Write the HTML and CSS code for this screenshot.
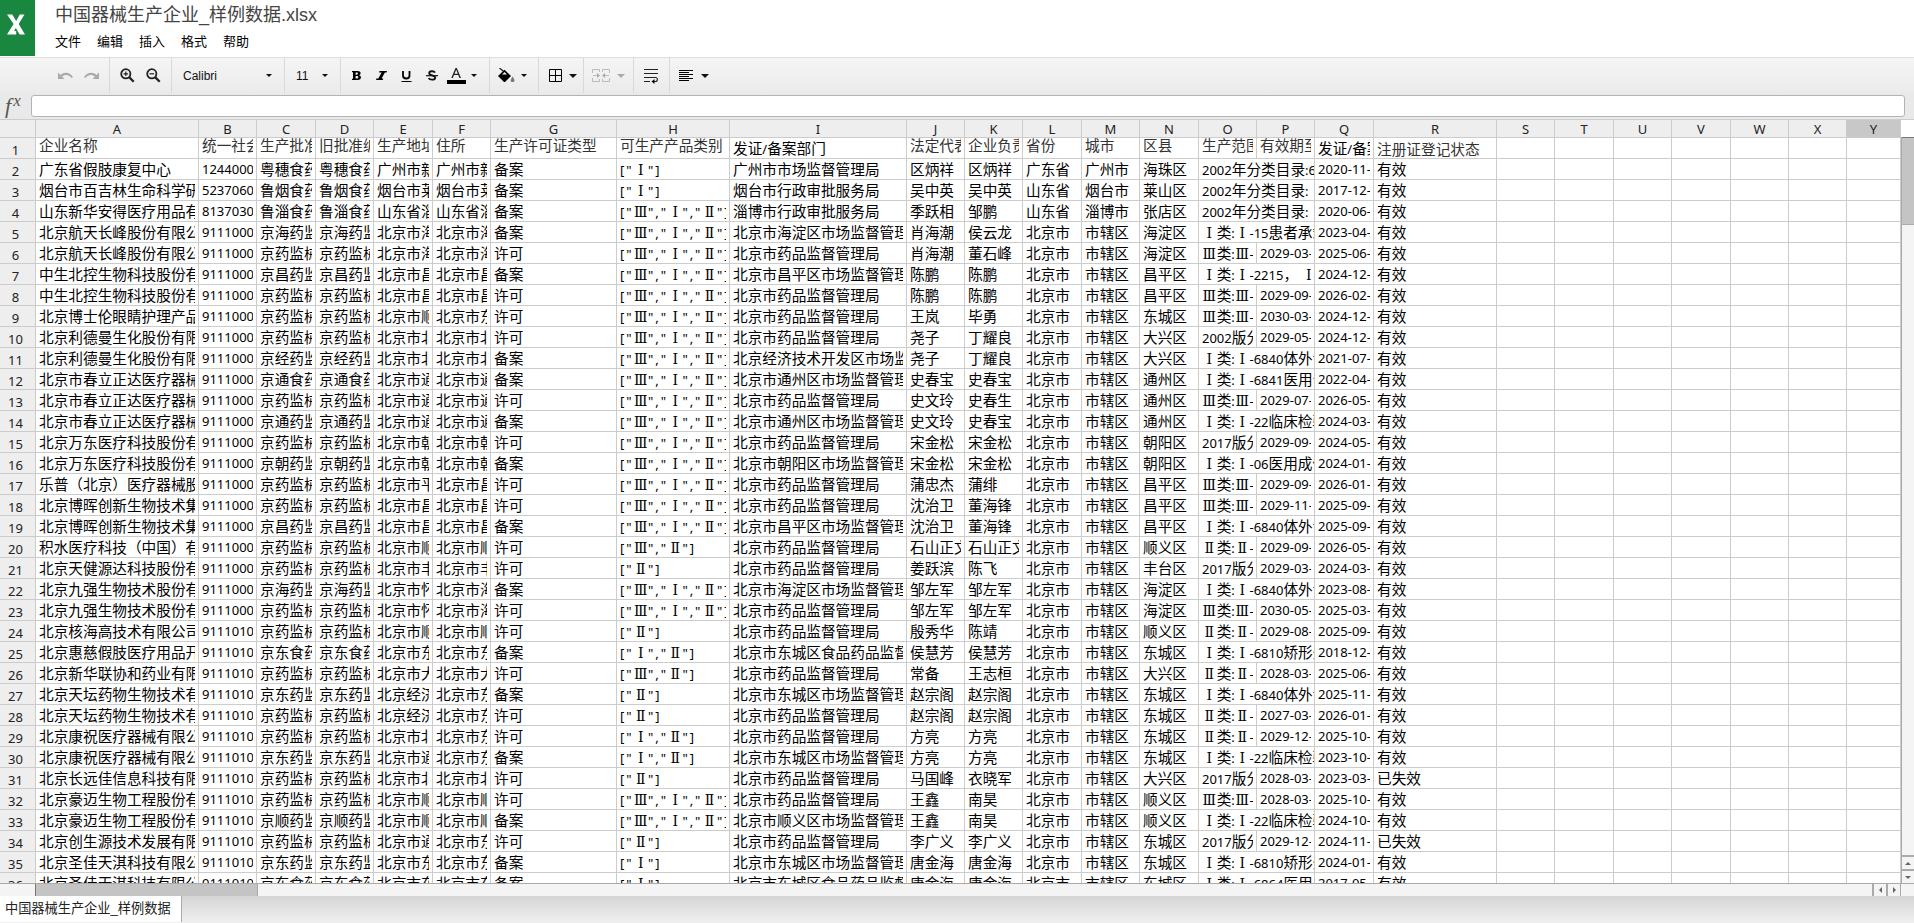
FILE: index.html
```html
<!DOCTYPE html>
<html lang="zh-CN">
  <head>
    <meta charset="UTF-8" />
    <meta name="viewport" content="width=device-width, initial-scale=1.0" />
    <title>中国器械生产企业_样例数据.xlsx</title>
    <link rel="stylesheet" href="styles.css">
  </head>
  <body>
    <header class="top">
      <div class="logo">
        <svg width="35" height="56" viewBox="0 0 35 56">
          <path d="M7 14.5h5.2l4 6.6 3.6-6.6h4.7l-5.8 9.6 6.3 10.4h-5.3l-3.9-6.6-1.8 3.1h2.2v3.5H7l6.6-10.6z" fill="#fff" />
        </svg>
      </div>
      <div class="top-text">
        <h1 class="title">中国器械生产企业_样例数据.xlsx</h1>
        <nav class="menu">
          <span>文件</span>
          <span>编辑</span>
          <span>插入</span>
          <span>格式</span>
          <span>帮助</span>
        </nav>
      </div>
    </header>

    <div class="toolbar">
      <div class="group group-history">
        <svg width="15" height="10" viewBox="0 0 15 10"><path d="M0 1.500V8h6.500L4 5.600c3-2.600 7-2.200 9.600 1.400L15 6C11.500 1 6 .6 2.500 4z" fill="#aaa" /></svg>
        <svg width="15" height="10" viewBox="0 0 15 10"><path d="M15 1.500V8H8.500L11 5.600C8 3 4 3.400 1.400 7L0 6C3.500 1 9 .6 12.500 4z" fill="#aaa" /></svg>
      </div>
      <div class="group group-zoom">
        <svg width="15" height="15" viewBox="0 0 15 15"><circle cx="5.800" cy="5.800" r="4.600" fill="none" stroke="#222" stroke-width="1.800" /><path d="M9.400 9.400l4.300 4.300" stroke="#222" stroke-width="2.200" /><path d="M3.500 5.800h4.600M5.800 3.500v4.600" stroke="#222" stroke-width="1.200" /></svg>
        <svg width="15" height="15" viewBox="0 0 15 15"><circle cx="5.800" cy="5.800" r="4.600" fill="none" stroke="#222" stroke-width="1.800" /><path d="M9.400 9.400l4.300 4.300" stroke="#222" stroke-width="2.200" /><path d="M3.500 5.800h4.600" stroke="#222" stroke-width="1.200" /></svg>
      </div>
      <div class="group group-font">
        <span class="label">Calibri</span>
        <i class="caret"></i>
      </div>
      <div class="group group-size">
        <span class="label">11</span>
        <i class="caret"></i>
      </div>
      <div class="group group-style">
        <svg width="10" height="15" viewBox="0 0 10 15"><path fill-rule="evenodd" d="M0 3h5.500c4 0 3.800 3.600 1.600 4.200C10 7.800 9.500 12 5.700 12H0v-1.300h1V4.300H0zM3.600 4.500v2.200h1.200c1.600 0 1.600-2.200 0-2.200zm0 3.600v2.500H5c1.800 0 1.800-2.500 0-2.500z" /></svg>
        <svg width="11" height="15" viewBox="0 0 11 15"><path d="M3.500 3H11l-.4 1.400H8.900L5.600 10.600h1.600l-.4 1.400H0l.4-1.400h1.900l3.300-6.200H3.100z" /></svg>
        <svg width="11" height="15" viewBox="0 0 11 15"><path d="M2 3v4.500c0 4 6.500 4 6.500 0V3" fill="none" stroke="#000" stroke-width="1.800" /><path d="M.5 13.500h10" stroke="#000" stroke-width="1" /></svg>
        <svg width="12" height="15" viewBox="0 0 12 15"><path d="M9 4.700C8 2.600 3.200 2.800 3.200 5.200c0 2.600 6 1.600 6 4.500 0 2.600-5.400 2.600-6.600.4" fill="none" stroke="#111" stroke-width="1.800" /><path d="M0 7.700h12" stroke="#111" stroke-width="1.200" /></svg>
        <svg width="19" height="17" viewBox="0 0 19 17"><path d="M4.300 11L8.500 1h1.300L14 11h-1.500l-1.200-3H7L5.800 11zM7.500 6.800h3.300L9.200 2.700z" fill="#222" /><path d="M0 13h19v4H0z" /></svg>
        <i class="caret"></i>
      </div>
      <div class="group group-fill">
        <svg width="17" height="15" viewBox="0 0 17 15"><path d="M1.500 0l6 5" stroke="#222" stroke-width="1.300" /><path d="M6.500 1.800L13 8l-6 6H6L0 8z" /><path d="M6.500 4L4 6.500h5z" fill="#eee" /><path d="M14.500 8.500c3 4 2.200 5.500 0 5.500s-2.500-1.500 0-5.500z" fill="#777" /></svg>
        <i class="caret"></i>
      </div>
      <div class="group group-border">
        <svg width="13" height="13" viewBox="0 0 13 13"><path d="M.5.5h12v12H.5zM6.500 0v13M0 6.500h13" fill="none" stroke="#000" /></svg>
        <i class="caret caret-big"></i>
      </div>
      <div class="group group-merge">
        <svg width="18" height="13" viewBox="0 0 18 13"><path d="M7.500 3V.5h-7V4M.5 9v3.500h7V10M10.500 3V.5h7V4M17.500 9v3.500h-7V10M1 6.500h6M17 6.500h-6" fill="none" stroke="#bbb" /><path d="M5 4l3 2.500L5 9zM13 4l-3 2.500L13 9z" fill="#aaa" /></svg>
        <i class="caret caret-big caret-off"></i>
      </div>
      <div class="group group-wrap">
        <svg width="14" height="16" viewBox="0 0 14 16"><path d="M0 1.500h14M0 5.500h14M0 9.500h11.500c2.500 0 2.500 4 0 4H9M0 13.500h6" fill="none" stroke="#222" stroke-width="1.100" /><path d="M10.500 11v5L7.500 13.500z" /></svg>
      </div>
      <div class="group group-align">
        <svg width="14" height="12" viewBox="0 0 14 12"><path d="M0 .5h14M0 2.500h10M0 4.500h14M0 6.500h10M0 8.500h14M0 10.500h10" stroke="#000" /></svg>
        <i class="caret caret-big"></i>
      </div>
    </div>

    <div class="formula">
      <div class="fx">f<sup>x</sup></div>
      <div class="formula-input"></div>
    </div>

    <main class="sheet">
      <div class="grid" id="grid"></div>
      <div class="vscroll">
        <div class="vthumb"></div>
        <div class="vbtns">
          <div class="vbtn"><i class="tri up"></i></div>
          <div class="vbtn"><i class="tri down"></i></div>
        </div>
      </div>
    </main>
    <div class="hscroll">
      <div class="hthumb"></div>
      <div class="hbtns">
        <div class="hbtn"><i class="tri left"></i></div>
        <div class="hbtn"><i class="tri right"></i></div>
      </div>
    </div>
    <footer class="tabs">
      <div class="tab">中国器械生产企业_样例数据</div>
    </footer>

    <script>
      const columns = "ABCDEFGHIJKLMNOPQRSTUVWXY".split("");
      const all = '["Ⅲ","Ⅰ","Ⅱ"]';
      const yj = "京药监械";
      const bj = "北京市药品监督管理局";

      const head = ["企业名称", "统一社会", "生产批准", "旧批准编", "生产地址", "住所", "生产许可证类型", "可生产产品类别", "发证/备案部门", "法定代表", "企业负责", "省份", "城市", "区县", "生产范围", "有效期至", "发证/备案", "注册证登记状态"];

      // name, code, licence, address, residence, classes, department, legal person,
      // manager, district, scope, valid until, issued, status, province, city
      const companies = [
        ["广东省假肢康复中心", "1244000", "粤穗食药", "广州市新", "广州市新", '["Ⅰ"]', "广州市市场监督管理局", "区炳祥", "区炳祥", "海珠区", "2002年分类目录:6", "", "2020-11-", "有效", "广东省", "广州市"],
        ["烟台市百吉林生命科学研", "5237060", "鲁烟食药", "烟台市莱", "烟台市莱", '["Ⅰ"]', "烟台市行政审批服务局", "吴中英", "吴中英", "莱山区", "2002年分类目录: Ⅰ", "", "2017-12-", "有效", "山东省", "烟台市"],
        ["山东新华安得医疗用品有", "8137030", "鲁淄食药", "山东省淄", "山东省淄", all, "淄博市行政审批服务局", "季跃相", "邹鹏", "张店区", "2002年分类目录: Ⅰ", "", "2020-06-", "有效", "山东省", "淄博市"],
        ["北京航天长峰股份有限公", "9111000", "京海药监", "北京市海", "北京市海", all, "北京市海淀区市场监督管理局", "肖海潮", "侯云龙", "海淀区", "Ⅰ类:Ⅰ-15患者承载", "", "2023-04-", "有效"],
        ["北京航天长峰股份有限公", "9111000", yj, "北京市海", "北京市海", all, bj, "肖海潮", "董石峰", "海淀区", "Ⅲ类:Ⅲ-", "2029-03-", "2025-06-", "有效"],
        ["中生北控生物科技股份有", "9111000", "京昌药监", "北京市昌", "北京市昌", all, "北京市昌平区市场监督管理局", "陈鹏", "陈鹏", "昌平区", "Ⅰ类:Ⅰ-2215， Ⅰ-", "", "2024-12-", "有效"],
        ["中生北控生物科技股份有", "9111000", yj, "北京市昌", "北京市昌", all, bj, "陈鹏", "陈鹏", "昌平区", "Ⅲ类:Ⅲ-", "2029-09-", "2026-02-", "有效"],
        ["北京博士伦眼睛护理产品", "9111000", yj, "北京市顺", "北京市东", all, bj, "王岚", "毕勇", "东城区", "Ⅲ类:Ⅲ-", "2030-03-", "2024-12-", "有效"],
        ["北京利德曼生化股份有限", "9111000", yj, "北京市北", "北京市北", all, bj, "尧子", "丁耀良", "大兴区", "2002版分", "2029-05-", "2024-12-", "有效"],
        ["北京利德曼生化股份有限", "9111000", "京经药监", "北京市北", "北京市北", all, "北京经济技术开发区市场监督", "尧子", "丁耀良", "大兴区", "Ⅰ类:Ⅰ-6840体外诊", "", "2021-07-", "有效"],
        ["北京市春立正达医疗器械", "9111000", "京通食药", "北京市通", "北京市通", all, "北京市通州区市场监督管理局", "史春宝", "史春宝", "通州区", "Ⅰ类:Ⅰ-6841医用化", "", "2022-04-", "有效"],
        ["北京市春立正达医疗器械", "9111000", yj, "北京市通", "北京市通", all, bj, "史文玲", "史春生", "通州区", "Ⅲ类:Ⅲ-", "2029-07-", "2026-05-", "有效"],
        ["北京市春立正达医疗器械", "9111000", "京通药监", "北京市通", "北京市通", all, "北京市通州区市场监督管理局", "史文玲", "史春宝", "通州区", "Ⅰ类:Ⅰ-22临床检验", "", "2024-03-", "有效"],
        ["北京万东医疗科技股份有", "9111000", yj, "北京市朝", "北京市朝", all, bj, "宋金松", "宋金松", "朝阳区", "2017版分", "2029-09-", "2024-05-", "有效"],
        ["北京万东医疗科技股份有", "9111000", "京朝药监", "北京市朝", "北京市朝", all, "北京市朝阳区市场监督管理局", "宋金松", "宋金松", "朝阳区", "Ⅰ类:Ⅰ-06医用成像", "", "2024-01-", "有效"],
        ["乐普（北京）医疗器械股", "9111000", yj, "北京市平", "北京市昌", all, bj, "蒲忠杰", "蒲绯", "昌平区", "Ⅲ类:Ⅲ-", "2029-09-", "2026-01-", "有效"],
        ["北京博晖创新生物技术集", "9111000", yj, "北京市昌", "北京市昌", all, bj, "沈治卫", "董海锋", "昌平区", "Ⅲ类:Ⅲ-", "2029-11-", "2025-09-", "有效"],
        ["北京博晖创新生物技术集", "9111000", "京昌药监", "北京市昌", "北京市昌", all, "北京市昌平区市场监督管理局", "沈治卫", "董海锋", "昌平区", "Ⅰ类:Ⅰ-6840体外诊", "", "2025-09-", "有效"],
        ["积水医疗科技（中国）有", "9111000", yj, "北京市顺", "北京市顺", '["Ⅲ","Ⅱ"]', bj, "石山正文", "石山正文", "顺义区", "Ⅱ类:Ⅱ-", "2029-09-", "2026-05-", "有效"],
        ["北京天健源达科技股份有", "9111000", yj, "北京市丰", "北京市丰", '["Ⅱ"]', bj, "姜跃滨", "陈飞", "丰台区", "2017版分", "2029-03-", "2024-03-", "有效"],
        ["北京九强生物技术股份有", "9111000", "京海药监", "北京市怀", "北京市海", all, "北京市海淀区市场监督管理局", "邹左军", "邹左军", "海淀区", "Ⅰ类:Ⅰ-6840体外诊", "", "2023-08-", "有效"],
        ["北京九强生物技术股份有", "9111000", yj, "北京市怀", "北京市海", all, bj, "邹左军", "邹左军", "海淀区", "Ⅲ类:Ⅲ-", "2030-05-", "2025-03-", "有效"],
        ["北京核海高技术有限公司", "9111010", yj, "北京市顺", "北京市顺", '["Ⅱ"]', bj, "殷秀华", "陈靖", "顺义区", "Ⅱ类:Ⅱ-", "2029-08-", "2025-09-", "有效"],
        ["北京惠慈假肢医疗用品开", "9111010", "京东食药", "北京市东", "北京市东", '["Ⅰ","Ⅱ"]', "北京市东城区食品药品监督管", "侯慧芳", "侯慧芳", "东城区", "Ⅰ类:Ⅰ-6810矫形外", "", "2018-12-", "有效"],
        ["北京新华联协和药业有限", "9111010", yj, "北京市大", "北京市大", '["Ⅲ","Ⅱ"]', bj, "常备", "王志桓", "大兴区", "Ⅱ类:Ⅱ-", "2028-03-", "2025-06-", "有效"],
        ["北京天坛药物生物技术有", "9111010", "京东药监", "北京经济", "北京市东", '["Ⅱ"]', "北京市东城区市场监督管理局", "赵宗阁", "赵宗阁", "东城区", "Ⅰ类:Ⅰ-6840体外诊", "", "2025-11-", "有效"],
        ["北京天坛药物生物技术有", "9111010", yj, "北京经济", "北京市东", '["Ⅱ"]', bj, "赵宗阁", "赵宗阁", "东城区", "Ⅱ类:Ⅱ-", "2027-03-", "2026-01-", "有效"],
        ["北京康祝医疗器械有限公", "9111010", yj, "北京市北", "北京市东", '["Ⅰ","Ⅱ"]', bj, "方亮", "方亮", "东城区", "Ⅱ类:Ⅱ-", "2029-12-", "2025-10-", "有效"],
        ["北京康祝医疗器械有限公", "9111010", "京东药监", "北京市通", "北京市东", '["Ⅰ","Ⅱ"]', "北京市东城区市场监督管理局", "方亮", "方亮", "东城区", "Ⅰ类:Ⅰ-22临床检验", "", "2023-10-", "有效"],
        ["北京长远佳信息科技有限", "9111010", yj, "北京市北", "北京市北", '["Ⅱ"]', bj, "马国峰", "衣晓军", "大兴区", "2017版分", "2028-03-", "2023-03-", "已失效"],
        ["北京豪迈生物工程股份有", "9111010", yj, "北京市顺", "北京市顺", all, bj, "王鑫", "南昊", "顺义区", "Ⅲ类:Ⅲ-", "2028-03-", "2025-10-", "有效"],
        ["北京豪迈生物工程股份有", "9111010", "京顺药监", "北京市顺", "北京市顺", all, "北京市顺义区市场监督管理局", "王鑫", "南昊", "顺义区", "Ⅰ类:Ⅰ-22临床检验", "", "2024-10-", "有效"],
        ["北京创生源技术发展有限", "9111010", yj, "北京市通", "北京市东", '["Ⅱ"]', bj, "李广义", "李广义", "东城区", "2017版分", "2029-12-", "2024-11-", "已失效"],
        ["北京圣佳天淇科技有限公", "9111010", "京东药监", "北京市东", "北京市东", '["Ⅰ"]', "北京市东城区市场监督管理局", "唐金海", "唐金海", "东城区", "Ⅰ类:Ⅰ-6810矫形外", "", "2024-01-", "有效"],
        ["北京圣佳天淇科技有限公", "9111010", "京东食药", "北京市东", "北京市东", '["Ⅰ"]', "北京市东城区食品药品监督管", "唐金海", "唐金海", "东城区", "Ⅰ类:Ⅰ-6864医用卫", "", "2017-05-", "有效"],
      ];

      const grid = document.getElementById("grid");

      function addCell(className, text) {
        const cell = document.createElement("div");
        cell.className = className;
        if (text) {
          const span = document.createElement("span");
          span.className = "text";
          // latin runs are set smaller, roman numerals are full width with serifs
          span.innerHTML = text
            .replace(/[\x20-\x7e]+/g, '<span class="latin">$&</span>')
            .replace(/[Ⅰ-Ⅲ]/g, '<span class="roman">$&</span>');
          cell.appendChild(span);
        }
        grid.appendChild(cell);
      }

      function addRow(number, values) {
        addCell("row-head", String(number));
        for (let c = 0; c < columns.length; c++) {
          const name = columns[c];
          let className = "cell col-" + name.toLowerCase();
          if (number === 1) className += " first";
          if (/^[\d-]+$/.test(values[c] || "")) className += " number";
          if (name === "O" && !values[c + 1] && values[c]) {
            addCell(className + " wide", values[c]);
            c++;
          } else {
            addCell(className, values[c]);
          }
        }
      }

      addCell("col-head corner", "");
      columns.forEach((name) => {
        addCell(name === "Y" ? "col-head active" : "col-head", name);
      });

      addRow(1, head);
      companies.forEach((c, i) => {
        const type = c[2] === yj ? "许可" : "备案";
        addRow(i + 2, [
          c[0], c[1], c[2], c[2], c[3], c[4], type, c[5], c[6], c[7], c[8],
          c[14] || "北京市", c[15] || "市辖区", c[9], c[10], c[11], c[12], c[13],
        ]);
      });
    </script>
  </body>
</html>
```
FILE: styles.css
```css
* {
  margin: 0;
  padding: 0;
  box-sizing: border-box;
}

body {
  width: 1914px;
  height: 923px;
  overflow: hidden;
  display: flex;
  flex-direction: column;
  background-color: #fff;
  color: #000;
  font-family: "Liberation Sans", "Noto Sans CJK SC", sans-serif;
}

svg {
  display: block;
  flex-shrink: 0;
}

.top {
  display: flex;
  height: 57px;
}

.logo {
  width: 35px;
  height: 56px;
  background-color: #1a8740;
}

.top-text {
  padding: 3px 0 0 20px;
}

.title {
  height: 26px;
  line-height: 24px;
  font-size: 18px;
  font-weight: normal;
  color: #444;
  white-space: nowrap;
}

.menu {
  display: flex;
  gap: 16px;
  height: 26px;
  line-height: 26px;
  font-size: 13px;
}

/* toolbar */
.toolbar {
  display: flex;
  height: 36px;
  border-top: 1px solid #e0e0e0;
  background: linear-gradient(#f5f5f5, #ebebeb);
}

.group {
  display: flex;
  align-items: center;
  border-right: 1px solid #d9d9d9;
}

.group-history {
  width: 110px;
  padding-left: 58px;
  gap: 11px;
}

.group-zoom {
  width: 62px;
  padding-left: 10px;
  gap: 11px;
}

.group-font {
  width: 113px;
  padding: 0 12px 0 11px;
  justify-content: space-between;
}

.group-size {
  width: 56px;
  padding: 0 12px 0 11px;
  justify-content: space-between;
}

.group-style {
  width: 149px;
  padding-left: 11px;
}

.group-style svg + svg {
  margin-left: 14px;
}

.group-style svg:nth-child(5) {
  margin-left: 9px;
}

.group-style .caret {
  margin-left: 5px;
}

.group-fill {
  width: 49px;
  padding-left: 8px;
  gap: 6px;
}

.group-border {
  width: 45px;
  padding-left: 10px;
  gap: 7px;
}

.group-merge {
  width: 50px;
  padding-left: 8px;
  gap: 7px;
}

.group-wrap {
  width: 36px;
  padding-left: 10px;
}

.group-align {
  padding-left: 9px;
  gap: 8px;
  border-right: none;
}

.label {
  font-size: 12px;
  color: #111;
}

.caret {
  border: 3px solid transparent;
  border-top-color: #111;
  border-bottom: none;
}

.caret-big {
  border-width: 4px;
  border-bottom: none;
}

.caret-off {
  border-top-color: #aaa;
}

/* formula bar */
.formula {
  display: flex;
  height: 26px;
  padding-top: 2px;
  background-color: #e9e9e9;
}

.fx {
  width: 31px;
  padding-left: 5px;
  font: italic 22px/22px "Liberation Serif", serif;
  color: #555;
}

.fx sup {
  display: inline-block;
  margin-left: 2px;
  font-size: 17px;
  line-height: 10px;
  vertical-align: 7px;
}

.formula-input {
  width: 1874px;
  height: 22px;
  border: 1px solid #b3b3b3;
  border-radius: 3px;
  background-color: #fff;
}

/* sheet */
.sheet {
  display: flex;
  height: 764px;
  overflow: hidden;
  border-top: 1px solid #ccc;
}

.grid {
  display: grid;
  grid-template-columns:
    36px 163px 58px 59px 58px 59px 58px 126px 113px 177px 58px 58px 59px
    58px 59px 58px 58px 59px 123px 58px 59px 58px 59px 58px 58px 54px;
  grid-template-rows: 18px;
  grid-auto-rows: 21px;
  width: 1901px;
  flex-shrink: 0;
  font-family: "Noto Sans CJK SC", sans-serif;
  font-size: 14.67px;
}

.latin {
  font-family: "Noto Sans", sans-serif;
  font-size: 13px;
}

.roman {
  display: inline-flex;
  justify-content: center;
  width: 14.67px;
  font-family: "DejaVu Serif", serif;
  font-size: 14px;
  line-height: 14px;
}

.col-head,
.row-head {
  display: flex;
  justify-content: center;
  background-color: #eee;
  border-right: 1px solid #ccc;
  border-bottom: 1px solid #ccc;
  color: #222;
}

.col-head {
  height: 18px;
  line-height: 16px;
}

.col-head.active {
  background-color: #c8c8c8;
}

.row-head {
  padding-right: 4px;
  line-height: 21px;
}

.cell {
  height: 21px;
  padding: 0 3px;
  border-right: 1px solid #ccc;
  border-bottom: 1px solid #ccc;
  min-width: 0;
}

.text {
  display: block;
  height: 20px;
  line-height: 20px;
  overflow: hidden;
  white-space: nowrap;
}

.col-head .text,
.row-head .text {
  overflow: visible;
  line-height: inherit;
}

.number .text {
  line-height: 18px;
}

.wide {
  grid-column: span 2;
  padding-right: 0;
}

.col-h .latin {
  letter-spacing: 1.9px;
}

.first .text {
  color: #333;
  line-height: 13px;
}

.first.col-i .text,
.first.col-q .text {
  color: #000;
  line-height: 20px;
}

.first.col-r .text {
  line-height: 22px;
}

/* scrollbars */
.vscroll {
  display: flex;
  flex-direction: column;
  width: 13px;
  margin-top: 17px;
  border-left: 1px solid #aaa;
  background-color: #f4f4f4;
}

.vthumb {
  height: 88px;
  border-top: 1px solid #777;
  border-bottom: 1px solid #aaa;
  background-color: #c4c4c4;
}

.vbtns {
  margin-top: auto;
}

.vbtn {
  display: flex;
  align-items: center;
  justify-content: center;
  height: 14px;
  border-top: 2px solid #aaa;
}

.hscroll {
  display: flex;
  height: 13px;
  border-top: 1px solid #aaa;
  background-color: #f4f4f4;
}

.hthumb {
  width: 223px;
  margin-left: 35px;
  border-left: 1px solid #777;
  border-right: 1px solid #aaa;
  background-color: #c4c4c4;
}

.hbtns {
  display: flex;
  margin-left: auto;
  margin-right: 13px;
  border-right: 1px solid #aaa;
}

.hbtn {
  display: flex;
  align-items: center;
  justify-content: center;
  width: 14px;
  border-left: 2px solid #aaa;
}

.tri {
  border: 3px solid transparent;
}

.up {
  border-top: none;
  border-bottom-color: #666;
}

.down {
  border-bottom: none;
  border-top-color: #666;
}

.left {
  border-left: none;
  border-right-color: #666;
}

.right {
  border-right: none;
  border-left-color: #666;
}

/* sheet tabs */
.tabs {
  height: 27px;
  background: linear-gradient(#d5d5d5, #f0f0f0);
}

.tab {
  width: 182px;
  height: 26px;
  padding-left: 5px;
  border-right: 1px solid #aaa;
  background-color: #fff;
  font-size: 13.2px;
  line-height: 25px;
  color: #222;
  white-space: nowrap;
}
```
